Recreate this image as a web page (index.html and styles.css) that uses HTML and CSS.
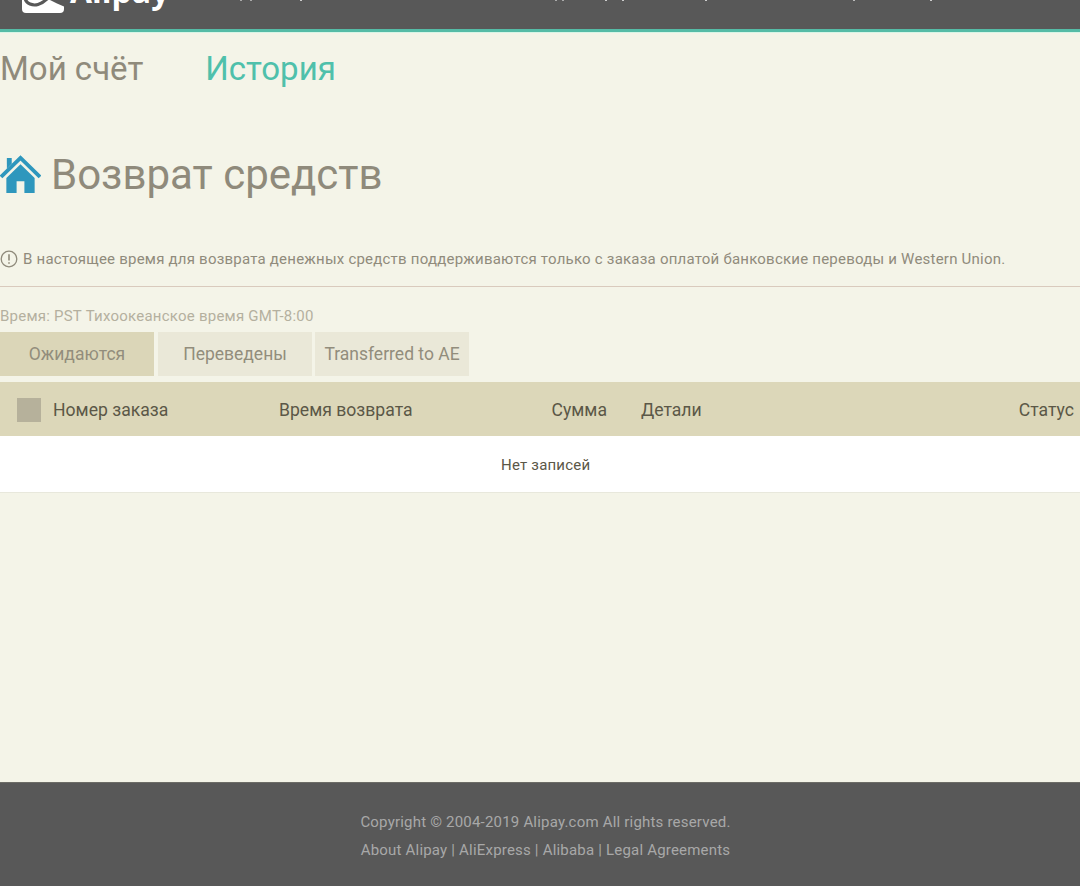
FILE: index.html
```html
<!DOCTYPE html>
<html lang="ru">
<head>
<meta charset="utf-8">
<title>Alipay</title>
<link rel="stylesheet" href="styles.css">
</head>
<body>
<header class="topbar">
  <div class="brand">
    <svg class="brand-icon" viewBox="0 0 42 42" aria-hidden="true">
      <path d="M4 0H38a4 4 0 0 1 4 4V38a4 4 0 0 1-4 4H4a4 4 0 0 1-4-4V4a4 4 0 0 1 4-4Z" fill="#fff"/>
      <path d="M28 0H42V35.500C37 33.500 32 31 27 28.500Z" fill="#585858"/>
      <path d="M3 27C4 33 11 35 16 33.500C20 32.300 23 30 26 27" fill="none" stroke="#585858" stroke-width="3.200"/>
    </svg>
    <span class="brand-name">Alipay</span>
  </div>
  <span class="specks"></span>
</header>
<div class="topline"></div>
<nav class="mainnav">
  <a class="mainnav-item">Мой счёт</a>
  <a class="mainnav-item is-active">История</a>
</nav>
<main class="content">
  <h1 class="title">
    <svg class="home-icon" viewBox="0 0 42 40" aria-hidden="true">
      <path d="M7 3h5v6l-5 5Z" fill="#2e97bd"/>
      <path d="M1 22.500 21 3 41 22.500" fill="none" stroke="#2e97bd" stroke-width="4"/>
      <path d="M6.500 23.500 21 9.500 35.500 23.500V39H25V27H17V39H6.500Z" fill="#2e97bd"/>
    </svg>
    Возврат средств
  </h1>
  <p class="notice">
    <svg class="notice-icon" viewBox="0 0 18 18" aria-hidden="true">
      <circle cx="9" cy="9" r="7.800" fill="none" stroke="#8f8a7b" stroke-width="1.300"/>
      <path d="M9 4.200V10.600M9 12.200V13.800" stroke="#8f8a7b" stroke-width="1.600" fill="none"/>
    </svg>
    В настоящее время для возврата денежных средств поддерживаются только с заказа оплатой банковские переводы и Western Union.
  </p>
  <p class="timezone">Время: PST Тихоокеанское время GMT-8:00</p>
  <div class="tabs">
    <a class="tab is-active">Ожидаются</a>
    <a class="tab">Переведены</a>
    <a class="tab">Transferred to AE</a>
  </div>
  <div class="table-head">
    <span class="checkbox"></span>
    <span class="col-order">Номер заказа</span>
    <span class="col-time">Время возврата</span>
    <span class="col-sum">Сумма</span>
    <span class="col-details">Детали</span>
    <span class="col-status">Статус</span>
  </div>
  <div class="table-empty">Нет записей</div>
</main>
<footer class="footer">
  <p>Copyright © 2004-2019 Alipay.com All rights reserved.</p>
  <p>About Alipay | AliExpress | Alibaba | Legal Agreements</p>
</footer>
</body>
</html>
```
FILE: styles.css
```css
* { box-sizing: border-box; }
html, body { margin: 0; padding: 0; }
body {
  width: 1080px;
  height: 886px;
  overflow: hidden;
  display: flex;
  flex-direction: column;
  background: #f4f4e8;
  font-family: Roboto, "Liberation Sans", sans-serif;
  color: #8f8a7b;
}
.topbar {
  position: relative;
  height: 29px;
  flex: none;
  overflow: hidden;
  background: #585858;
  padding-left: 22px;
}
.brand {
  display: flex;
  align-items: flex-end;
  gap: 6px;
  height: 13px;
}
.brand-icon { width: 42px; height: 42px; flex: none; }
.brand-name {
  color: #fff;
  font-family: "Open Sans", "Liberation Sans", sans-serif;
  font-weight: 700;
  font-size: 32px;
  line-height: 42px;
  margin-bottom: 1px;
}
.specks {
  position: absolute;
  left: 240px;
  top: 0;
  width: 2px;
  height: 1px;
  background: #aaa;
  box-shadow: 10px 0 #aaa, 60px 0 #ccc, 315px 0 #aaa, 322px 0 #aaa, 365px 0 #ccc,
    382px 0 #ccc, 465px 0 #ccc, 613px 0 #bbb, 690px 0 #ccc;
}
.topline {
  height: 4px;
  flex: none;
  border-top: 3px solid #55bba6;
  background: #d8f5e6;
}
.mainnav {
  display: flex;
  gap: 62px;
  flex: none;
  padding-top: 15px;
  height: 72px;
}
.mainnav-item { font-size: 33px; line-height: 41px; color: #8f8a7b; }
.mainnav-item.is-active { color: #4fc0ab; }
.content { flex: 1; }
.title {
  display: flex;
  align-items: center;
  gap: 10px;
  margin: 46px 0 0;
  height: 46px;
  font-size: 42px;
  font-weight: 400;
  color: #8f8a7b;
}
.home-icon { width: 41px; height: 39px; flex: none; }
.notice {
  display: flex;
  align-items: center;
  gap: 5px;
  margin: 49px 0 0;
  height: 28px;
  padding-bottom: 2px;
  font-size: 15px;
  line-height: 20px;
  color: #908b7c;
  letter-spacing: 0.22px;
}
.notice-icon { width: 18px; height: 18px; flex: none; }
.timezone {
  margin: 12px 0 0;
  padding-top: 19px;
  border-top: 1px solid #d9cabd;
  height: 47px;
  font-size: 15px;
  line-height: 20px;
  color: #b4b09f;
  letter-spacing: 0.23px;
}
.tabs { display: flex; gap: 3px; margin-top: -1px; }
.tab {
  display: flex;
  align-items: center;
  justify-content: center;
  width: 154px;
  height: 44px;
  background: #eae8d8;
  font-size: 17.5px;
  color: #928d7c;
}
.tab.is-active { background: #dbd6b8; margin-right: 1px; }
.table-head {
  display: grid;
  grid-template-columns: 24px 236px 200px 130px 1fr auto;
  align-items: center;
  height: 54px;
  margin-top: 6px;
  padding: 2px 6px 0 17px;
  background: #dcd7b9;
  font-size: 17.6px;
  color: #5b5747;
}
.checkbox { width: 24px; height: 24px; background: #b6b19b; }
.col-order { padding-left: 12px; }
.col-time { padding-left: 2px; }
.col-sum { text-align: right; }
.col-details { padding-left: 34px; }
.table-empty {
  height: 57px;
  background: #fff;
  border-bottom: 1px solid #e8e8dc;
  padding: 19px 0 0 501px;
  font-size: 15px;
  line-height: 20px;
  color: #5b5747;
  letter-spacing: 0.2px;
}
.footer {
  flex: none;
  height: 104px;
  padding: 25px 0 0 11px;
  background: #585858;
  border-top: 1px solid #6c6c66;
  text-align: center;
  font-size: 15px;
  line-height: 28px;
  color: #a8a8a8;
  letter-spacing: 0.2px;
}
.footer p { margin: 0; }
```
